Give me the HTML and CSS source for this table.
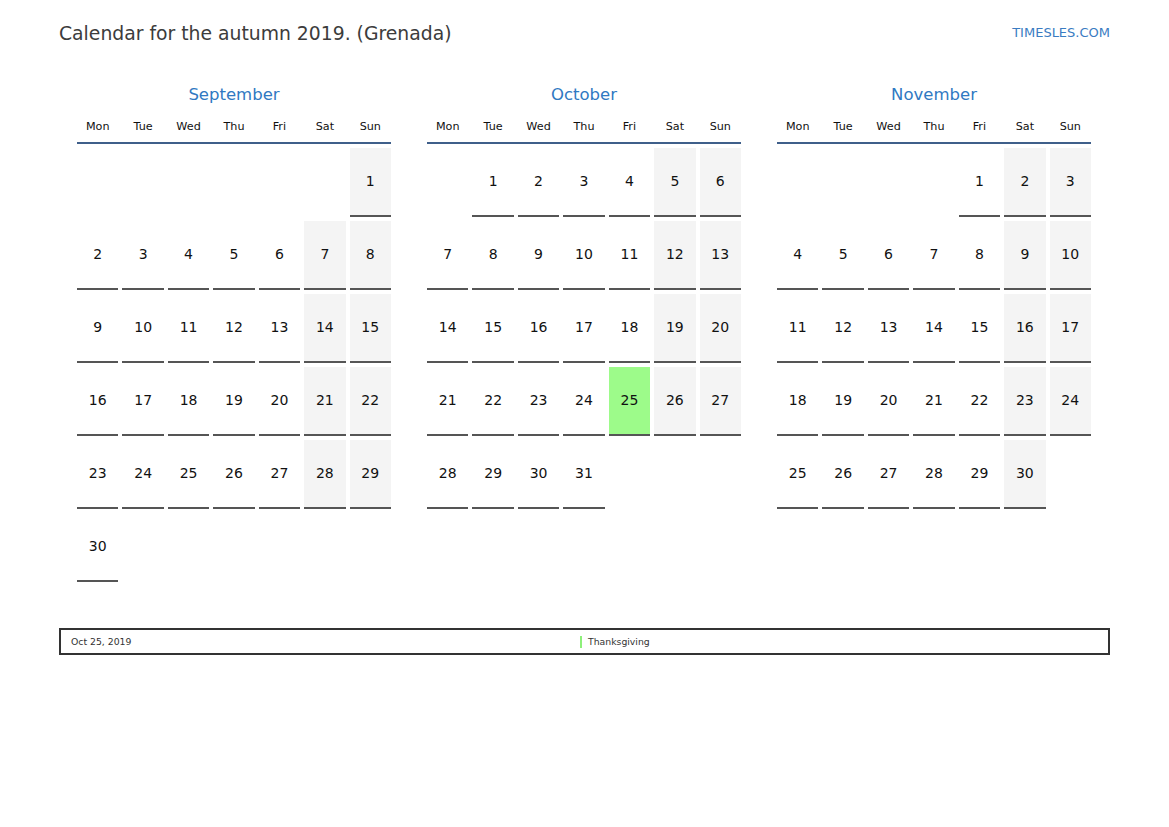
FILE: index.html
```html
<!DOCTYPE html>
<html>
<head>
<meta charset="utf-8">
<link rel="stylesheet" href="styles.css">
</head>
<body>
<header class="top">
  <h1 class="title">Calendar for the autumn 2019. (Grenada)</h1>
  <a class="brand">TIMESLES.COM</a>
</header>
<section class="months">
  <div class="month">
    <div class="mname">September</div>
    <div class="dow"><span>Mon</span><span>Tue</span><span>Wed</span><span>Thu</span><span>Fri</span><span>Sat</span><span>Sun</span></div>
    <div class="days">
      <div class="c e"></div><div class="c e"></div><div class="c e"></div><div class="c e"></div><div class="c e"></div><div class="c e"></div><div class="c w">1</div>
      <div class="c">2</div><div class="c">3</div><div class="c">4</div><div class="c">5</div><div class="c">6</div><div class="c w">7</div><div class="c w">8</div>
      <div class="c">9</div><div class="c">10</div><div class="c">11</div><div class="c">12</div><div class="c">13</div><div class="c w">14</div><div class="c w">15</div>
      <div class="c">16</div><div class="c">17</div><div class="c">18</div><div class="c">19</div><div class="c">20</div><div class="c w">21</div><div class="c w">22</div>
      <div class="c">23</div><div class="c">24</div><div class="c">25</div><div class="c">26</div><div class="c">27</div><div class="c w">28</div><div class="c w">29</div>
      <div class="c">30</div>
    </div>
  </div>
  <div class="month">
    <div class="mname">October</div>
    <div class="dow"><span>Mon</span><span>Tue</span><span>Wed</span><span>Thu</span><span>Fri</span><span>Sat</span><span>Sun</span></div>
    <div class="days">
      <div class="c e"></div><div class="c">1</div><div class="c">2</div><div class="c">3</div><div class="c">4</div><div class="c w">5</div><div class="c w">6</div>
      <div class="c">7</div><div class="c">8</div><div class="c">9</div><div class="c">10</div><div class="c">11</div><div class="c w">12</div><div class="c w">13</div>
      <div class="c">14</div><div class="c">15</div><div class="c">16</div><div class="c">17</div><div class="c">18</div><div class="c w">19</div><div class="c w">20</div>
      <div class="c">21</div><div class="c">22</div><div class="c">23</div><div class="c">24</div><div class="c h">25</div><div class="c w">26</div><div class="c w">27</div>
      <div class="c">28</div><div class="c">29</div><div class="c">30</div><div class="c">31</div>
    </div>
  </div>
  <div class="month">
    <div class="mname">November</div>
    <div class="dow"><span>Mon</span><span>Tue</span><span>Wed</span><span>Thu</span><span>Fri</span><span>Sat</span><span>Sun</span></div>
    <div class="days">
      <div class="c e"></div><div class="c e"></div><div class="c e"></div><div class="c e"></div><div class="c">1</div><div class="c w">2</div><div class="c w">3</div>
      <div class="c">4</div><div class="c">5</div><div class="c">6</div><div class="c">7</div><div class="c">8</div><div class="c w">9</div><div class="c w">10</div>
      <div class="c">11</div><div class="c">12</div><div class="c">13</div><div class="c">14</div><div class="c">15</div><div class="c w">16</div><div class="c w">17</div>
      <div class="c">18</div><div class="c">19</div><div class="c">20</div><div class="c">21</div><div class="c">22</div><div class="c w">23</div><div class="c w">24</div>
      <div class="c">25</div><div class="c">26</div><div class="c">27</div><div class="c">28</div><div class="c">29</div><div class="c w">30</div>
    </div>
  </div>
</section>
<div class="legend">
  <div class="lcol">Oct 25, 2019</div>
  <div class="lcol"><span class="hname">Thanksgiving</span></div>
</div>
</body>
</html>
```

FILE: styles.css
```css
html, body {
  margin: 0;
  padding: 0;
  background: #fff;
}
body {
  font-family: "DejaVu Sans", Verdana, sans-serif;
  color: #111;
  width: 1169px;
}
.top {
  display: flex;
  justify-content: space-between;
  align-items: center;
  padding: 21px 59px 0 59px;
  height: 24px;
}
.title {
  margin: 0;
  font-weight: normal;
  font-size: 18.8px;
  line-height: 24px;
  color: #3c3c3c;
  padding-top: 1px;
}
.brand {
  font-size: 13px;
  line-height: 24px;
  color: #3a7cc2;
  text-decoration: none;
}
.months {
  display: flex;
  justify-content: flex-start;
  gap: 36px;
  padding-left: 77px;
  margin-top: 40px;
}
.month {
  width: 314px;
}
.mname {
  text-align: center;
  font-size: 16.5px;
  line-height: 20px;
  color: #3079c2;
  margin-bottom: 12px;
}
.dow {
  display: grid;
  grid-template-columns: repeat(7, 1fr);
  column-gap: 4px;
  font-size: 11.2px;
  line-height: 20px;
  padding-bottom: 5px;
  border-bottom: 2px solid #3f5f8a;
  text-align: center;
  color: #111;
}
.days {
  display: grid;
  grid-template-columns: repeat(7, 1fr);
  column-gap: 4px;
  row-gap: 4px;
  margin-top: 4px;
}
.c {
  box-sizing: content-box;
  height: 65px;
  padding-bottom: 2px;
  border-bottom: 2px solid #555;
  display: flex;
  align-items: center;
  justify-content: center;
  font-size: 14px;
  color: #111;
}
.c.e {
  border-bottom-color: transparent;
}
.c.w {
  background: #f4f4f4;
}
.c.h {
  background: #9dfb8a;
}
.legend {
  margin: 46px 59px 0 59px;
  border: 2px solid #333;
  height: 23px;
  display: grid;
  grid-template-columns: 519px 1fr;
  align-items: center;
  font-size: 9.3px;
  color: #333;
}
.lcol {
  padding-left: 10px;
}
.lcol:last-child {
  padding-left: 0;
}
.hname {
  border-left: 2px solid #8ef07a;
  padding-left: 6px;
  line-height: 12px;
  display: inline-block;
}
```
